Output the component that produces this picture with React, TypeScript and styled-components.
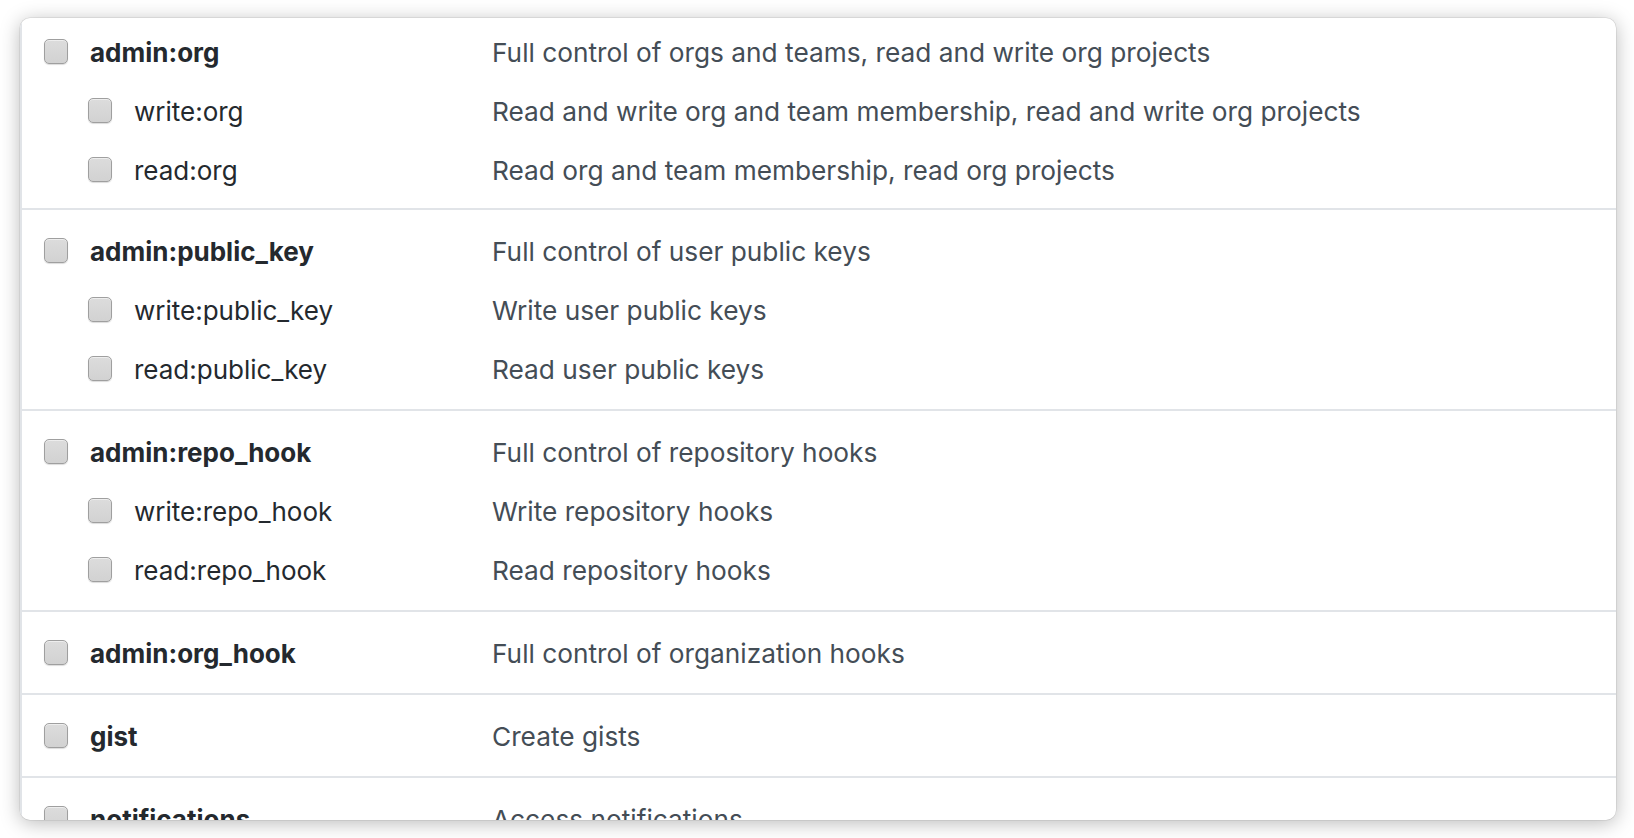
import React from "react";
import styled, { createGlobalStyle } from "styled-components";

const GlobalStyle = createGlobalStyle`
  html, body {
    margin: 0;
    padding: 0;
    background: #ffffff;
  }
  * { box-sizing: border-box; }
`;

const Page = styled.div`
  width: 1634px;
  height: 838px;
  padding: 18px 18px 18px 20px;
  background: #ffffff;
  overflow: hidden;
`;

const Window = styled.div`
  width: 1596px;
  height: 802px;
  background: #ffffff;
  border-radius: 10px;
  overflow: hidden;
  box-shadow: 0 3px 20px rgba(0, 0, 0, 0.28), 0 0 0 0.5px rgba(0, 0, 0, 0.12);
  display: flex;
`;

const Content = styled.div`
  flex: 1;
  border-left: 2px solid #e1e4e8;
  display: flex;
  flex-direction: column;
`;

const Section = styled.div<{ $first?: boolean }>`
  padding: ${(p) => (p.$first ? "5px 0 8px" : "12px 0 10px")};
  border-bottom: 2px solid #e1e4e8;
  flex-shrink: 0;
`;

const Row = styled.div`
  height: 59px;
  display: flex;
  align-items: center;
`;

const LabelCell = styled.label<{ $level: number }>`
  width: 470px;
  flex-shrink: 0;
  display: flex;
  align-items: center;
  gap: 22px;
  padding-left: ${(p) => 22 + p.$level * 44}px;
`;

const Check = styled.input.attrs({ type: "checkbox" })`
  appearance: none;
  -webkit-appearance: none;
  margin: 0;
  width: 24px;
  height: 25px;
  border-radius: 5px;
  border: 1.5px solid #9f9f9f;
  background: linear-gradient(#dcdcdc, #d2d2d2);
  box-shadow: inset 0 1px 0 rgba(255, 255, 255, 0.5), 0 1px 1px rgba(0, 0, 0, 0.14);
  flex-shrink: 0;
  position: relative;
  top: -1px;
`;

const ScopeName = styled.span<{ $bold: boolean }>`
  font-family: Inter, "Liberation Sans", sans-serif;
  font-size: 26px;
  font-weight: ${(p) => (p.$bold ? 700 : 400)};
  color: #24292e;
  white-space: nowrap;
`;

const Description = styled.span`
  font-family: Inter, "Liberation Sans", sans-serif;
  font-size: 26.25px;
  color: #444d56;
  white-space: nowrap;
`;

type Scope = { name: string; desc: string; children?: { name: string; desc: string }[] };

const scopes: Scope[] = [
  {
    name: "admin:org",
    desc: "Full control of orgs and teams, read and write org projects",
    children: [
      { name: "write:org", desc: "Read and write org and team membership, read and write org projects" },
      { name: "read:org", desc: "Read org and team membership, read org projects" },
    ],
  },
  {
    name: "admin:public_key",
    desc: "Full control of user public keys",
    children: [
      { name: "write:public_key", desc: "Write user public keys" },
      { name: "read:public_key", desc: "Read user public keys" },
    ],
  },
  {
    name: "admin:repo_hook",
    desc: "Full control of repository hooks",
    children: [
      { name: "write:repo_hook", desc: "Write repository hooks" },
      { name: "read:repo_hook", desc: "Read repository hooks" },
    ],
  },
  { name: "admin:org_hook", desc: "Full control of organization hooks" },
  { name: "gist", desc: "Create gists" },
  { name: "notifications", desc: "Access notifications" },
];

const ScopeRow = ({ name, desc, level }: { name: string; desc: string; level: number }) => (
  <Row>
    <LabelCell $level={level}>
      <Check />
      <ScopeName $bold={level === 0}>{name}</ScopeName>
    </LabelCell>
    <Description>{desc}</Description>
  </Row>
);

export default function App() {
  return (
    <>
      <GlobalStyle />
      <Page>
        <Window>
          <Content>
            {scopes.map((s, i) => (
              <Section key={s.name} $first={i === 0}>
                <ScopeRow name={s.name} desc={s.desc} level={0} />
                {s.children?.map((c) => (
                  <ScopeRow key={c.name} name={c.name} desc={c.desc} level={1} />
                ))}
              </Section>
            ))}
          </Content>
        </Window>
      </Page>
    </>
  );
}
